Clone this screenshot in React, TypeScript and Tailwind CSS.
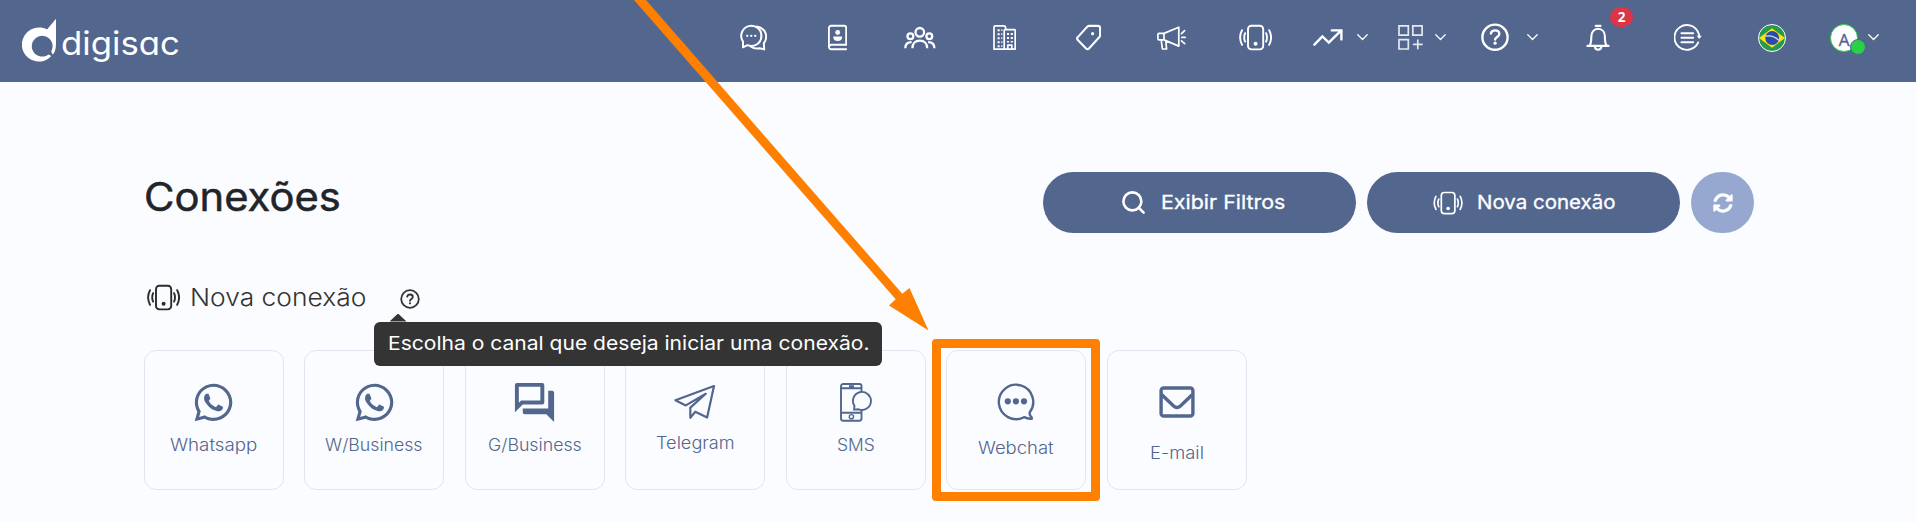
import { useLayoutEffect, useRef, useState } from "react";
import type { ReactNode } from "react";
import { Search } from "lucide-react";
import { FaSyncAlt, FaWhatsapp } from "react-icons/fa";
import { MdOutlineForum } from "react-icons/md";

/** One line of text whose glyphs are widened or narrowed to fill `width`. */
function FitText({ width, className = "", children }: { width: number; className?: string; children: string }) {
  const ref = useRef<HTMLSpanElement>(null);
  const [scale, setScale] = useState(1);
  useLayoutEffect(() => {
    if (ref.current && ref.current.offsetWidth) setScale(width / ref.current.offsetWidth);
  }, [width]);
  return (
    <span className="block shrink-0 text-left whitespace-nowrap" style={{ width }}>
      <span ref={ref} className={`inline-block origin-left ${className}`} style={{ transform: `scaleX(${scale})` }}>
        {children}
      </span>
    </span>
  );
}

function Glyph({ w, className = "", sw = 2, children }: { w: number; className?: string; sw?: number; children: ReactNode }) {
  return (
    <svg
      width={w}
      height={28}
      viewBox={`0 0 ${w} 28`}
      fill="none"
      stroke="currentColor"
      strokeWidth={sw}
      strokeLinecap="round"
      strokeLinejoin="round"
      className={`shrink-0 ${className}`}
    >
      {children}
    </svg>
  );
}

function Chevron({ className }: { className: string }) {
  return (
    <Glyph w={11} sw={1.3} className={className}>
      <path d="M.8 11.8 5.5 16.5l4.7-4.7" />
    </Glyph>
  );
}

function PhoneWaves({ className = "", sw = 1.9 }: { className?: string; sw?: number }) {
  return (
    <svg viewBox="0 0 33 28" fill="none" stroke="currentColor" strokeWidth={sw} strokeLinecap="round" className={`shrink-0 ${className}`}>
      <rect x="9" y="2.8" width="15.2" height="23.6" rx="3.4" />
      <circle cx="16.6" cy="20.8" r="2" fill="currentColor" stroke="none" />
      <path d="M6.1 10.2q-1.8 4.3 0 8.4M3 7.2q-3.8 7.2 0 14.6M27.1 10.2q1.8 4.3 0 8.4M30.2 7.2q3.8 7.2 0 14.6" />
    </svg>
  );
}

function Logo() {
  return (
    <div className="flex w-[718px] shrink-0 items-center pt-[5px]">
      <svg width="36" height="46" viewBox="0 0 36 46" fill="#fff" className="mt-[2px] mr-[3px]">
        <path
          fillRule="evenodd"
          d="M17 9.6c3.1 0 5.6.6 8 1.8L34 .8V26c0 5-1.3 8.5-3.2 10.8l-1.6-3.4A10.4 10.4 0 1 0 26.6 36.4l2.8 1.7A17 17 0 1 1 17 9.6Z"
        />
      </svg>
      <div className="pt-[6px]">
        <FitText width={119} className="text-[33px]/[36px] font-normal text-white [font-feature-settings:'cv11']">digisac</FitText>
      </div>
    </div>
  );
}

function Header() {
  return (
    <header className="flex h-[82px] items-center bg-[#52668e] pb-[8px] pl-[22px] text-white">
      <Logo />
      <nav className="flex items-center">
        <Glyph w={27}>
          <path d="M3 24.3V18.6A10.1 10.1 0 1 1 7.4 22.2Z" />
          <path d="M16.8 3.4C25.4 5 28.8 13.6 23.8 20.4l.4 6-4.6-1.2c-3 .8-6 .4-8.6-1.4" />
          <path d="M19.8 6.6c3 5.4 1.6 13-5.2 16.2" strokeWidth="1" />
          <path d="M7.2 12.8h.1M11.2 12.8h.1M15.2 12.8h.1" strokeWidth="2.3" />
        </Glyph>
        <Glyph w={19} className="ml-[61px]" sw={1.9}>
          <path d="M18.2 26.2H3.4A2.5 2.5 0 0 1 .9 23.7V5.2a2.5 2.5 0 0 1 2.5-2.5h12.8a2 2 0 0 1 2 2v17.1H3.4a2.2 2.2 0 0 0-2.2 2.2" />
          <circle cx="9.7" cy="9.5" r="2.4" fill="currentColor" stroke="none" />
          <path d="M5.2 13.5h9c0 3-1.5 4.5-4.5 4.5s-4.5-1.5-4.5-4.5Z" fill="currentColor" stroke="none" />
        </Glyph>
        <Glyph w={32} className="ml-[57px]" sw={2.3}>
          <circle cx="15.8" cy="9.3" r="4.3" />
          <circle cx="6.4" cy="13.3" r="2.9" />
          <circle cx="25.3" cy="13.3" r="2.9" />
          <path strokeLinecap="butt" d="M8.4 25.2c0-4.6 2.8-7.6 7.4-7.6s7.4 3 7.4 7.6M1.3 25.2c0-3.8 2.2-6 6.3-6M30.4 25.2c0-3.8-2.2-6-6.3-6" />
        </Glyph>
        <Glyph w={23} className="ml-[57px]" sw={1.7}>
          <path d="M11.2 26.2H1V4a1.2 1.2 0 0 1 1.2-1.2h8.4a2 2 0 0 1 2 2v1.4M11.2 26.2V7.6a1 1 0 0 1 1-1h9a1 1 0 0 1 1 1v18.6Z" />
          <path d="M14.8 26v-3.8h4V26" />
          <path strokeWidth="2.1" strokeLinecap="butt" strokeDasharray="2.1 1.9" d="M5.6 6.2v18M15 10v9.6M18.8 10v9.6" />
          <path strokeWidth="1.1" strokeLinecap="butt" strokeDasharray="1.9 2.1" d="M8.8 6.2v18" />
        </Glyph>
        <Glyph w={25} className="ml-[60px]" sw={2.1}>
          <path d="M13.3 2.9h8.8a2 2 0 0 1 2 2v7.3a3 3 0 0 1-.9 2.1L13 25.5a2 2 0 0 1-2.9 0l-8.3-8.6a2 2 0 0 1 0-2.8l9.3-10.2a3 3 0 0 1 2.2-1Z" />
          <circle cx="16.6" cy="10.7" r="1.6" fill="currentColor" stroke="none" />
        </Glyph>
        <Glyph w={29} className="ml-[56px]" sw={1.7}>
          <path d="M7 10.4 21.8 4.2v18.9L7 16.9M2 10.4h5v6.5H2a1.1 1.1 0 0 1-1.1-1.1v-4.3A1.1 1.1 0 0 1 2 10.4ZM4.2 17l1.2 9h4.2L8.8 17.8M24.5 10.6l3.1-3M24.8 14.4h3.4M24.5 17.8l3.1 2.9" />
        </Glyph>
        <PhoneWaves className="ml-[53px] h-[28px] w-[33px]" />
        <Glyph w={30} className="ml-[41px]" sw={2.4}>
          <path strokeLinejoin="miter" d="m1.4 21.7 8-8.3 6.4 6.2L28 7.6M18.8 7.4h9.6v9" />
        </Glyph>
        <Chevron className="ml-[14px]" />
        <Glyph w={25} className="ml-[30px] text-white/85" sw={1.7}>
          <path strokeLinejoin="miter" d="M1 2.8h9.3v9.3H1ZM14.8 2.8h9.3v9.3h-9.3ZM1 16.7h9.3V26H1ZM19.8 17.2v8.4M15.6 21.4H24" />
        </Glyph>
        <Chevron className="ml-[12px]" />
        <Glyph w={28} className="ml-[35px]" sw={2.4}>
          <circle cx="14" cy="14.2" r="12.6" />
          <path d="M9.9 10.6c.4-2 2-3.2 4.2-3.2 2.4 0 4.2 1.4 4.2 3.6 0 2.9-4.2 2.9-4.2 5.6" />
          <circle cx="14.1" cy="20.2" r="1.6" fill="currentColor" stroke="none" />
        </Glyph>
        <Chevron className="ml-[18px]" />
        <div className="relative ml-[48px]">
          <Glyph w={24} sw={2.1}>
            <path d="M9.7 2.9h4.8M1.4 22.9h21.2M3.6 22.4c1.8-2.4 1.7-4.4 1.7-8.6 0-4.6 2.6-8 6.8-8s6.8 3.4 6.8 8c0 4.2-.1 6.2 1.7 8.6M8.8 23.4c.2 2.4 1.6 3.4 3.3 3.4s3.1-1 3.3-3.4" />
          </Glyph>
          <span className="absolute top-[-16px] left-[24px] flex h-[20px] w-[23px] items-center justify-center rounded-full bg-[#dc3545] font-['Open_Sans','Noto_Sans',sans-serif] text-[13.5px] font-bold">
            2
          </span>
        </div>
        <Glyph w={28} className="ml-[64px]" sw={1.9}>
          <path d="M24.6 10.4A12.4 12.4 0 1 0 24.2 19.4M24.6 10.4q.6 1.4.7 3M7.4 10.2h11.8M7.4 14.7h11.8M7.4 19.3h11.8" />
          <path d="M22.6 12.8h5.2l-2.6 3.2Z" fill="currentColor" stroke="none" />
        </Glyph>
        <svg width="28" height="28" viewBox="0 0 28 28" className="mt-px ml-[56px]">
          <circle cx="14" cy="14" r="13.5" fill="#27994a" stroke="#fff" strokeWidth="1" />
          <path d="M14 4.2 27 14 14 23.8 1 14Z" fill="#ffe10f" />
          <circle cx="14.2" cy="14" r="6.9" fill="#2a4ba8" />
          <path d="M7.6 12.2c4.8-.8 9.6.6 13.2 4.2" stroke="#cfe0f5" strokeWidth="1.3" fill="none" />
        </svg>
        <div className="relative mt-px ml-[44px] flex h-[28px] w-[28px] items-center justify-center rounded-full border border-[#28d146] bg-white">
          <span className="pt-[3px] font-['Open_Sans','Noto_Sans',sans-serif] text-[17px] leading-none text-[#52668e] [-webkit-text-stroke:0.4px_#52668e]">A</span>
          <span className="absolute top-[14px] left-[19px] h-[16px] w-[16px] rounded-full border-[1.5px] border-[#52668e] bg-[#28d146]" />
        </div>
        <Chevron className="ml-[10px]" />
      </nav>
    </header>
  );
}

function TelegramIcon() {
  return (
    <svg width="42" height="36" viewBox="0 0 42 36" fill="none" stroke="currentColor" strokeWidth="2.2" strokeLinejoin="round" strokeLinecap="round">
      <path d="M40 2 1.4 16.2l10.4 5.2 20-11.6L16.3 23.6v10.2l5-6 11.8 5.8Z" />
    </svg>
  );
}

function SmsIcon() {
  return (
    <svg width="32" height="39" viewBox="0 0 32 39" fill="none" stroke="currentColor" strokeWidth="1.9" strokeLinejoin="round">
      <path d="M21.5 9V3.2A2.2 2.2 0 0 0 19.3 1H3.2A2.2 2.2 0 0 0 1 3.2v32.4a2.2 2.2 0 0 0 2.2 2.2h16.1a2.2 2.2 0 0 0 2.2-2.2V27M1 5.3h20.5M1 29.7h20.5M9 3.2h5" />
      <circle cx="11.4" cy="33.7" r="2.1" strokeWidth="1.4" />
      <path d="M14 26.6l.5-3.6A9 9 0 1 1 18.6 26.3Z" />
    </svg>
  );
}

function WebchatIcon() {
  return (
    <svg width="38" height="38" viewBox="0 0 38 38" fill="none" stroke="currentColor" strokeWidth="2.4" strokeLinejoin="round">
      <path d="M32.7 29.4A17.2 17.2 0 1 0 27 34.2Q30.8 36 34.8 35.7 35 34.4 33.6 33 32.4 31.6 32.7 29.4Z" />
      <g fill="currentColor" stroke="none">
        <circle cx="10.8" cy="18.3" r="3.1" />
        <circle cx="18.9" cy="18.3" r="3.1" />
        <circle cx="27" cy="18.3" r="3.1" />
      </g>
    </svg>
  );
}

function EmailIcon() {
  return (
    <svg width="36" height="32" viewBox="0 0 36 32" fill="none" stroke="currentColor" strokeWidth="3.4" strokeLinejoin="round">
      <rect x="2.1" y="2" width="31.8" height="28" rx="2.6" />
      <path d="M2.6 8.6 14.6 20q3.4 3 6.8 0L33.4 8.6" />
    </svg>
  );
}

const channels: { label: string; width: number; gap: string; icon: ReactNode }[] = [
  { label: "Whatsapp", width: 87, gap: "mt-[9px]", icon: <FaWhatsapp size={43} /> },
  { label: "W/Business", width: 98, gap: "mt-[9px]", icon: <FaWhatsapp size={43} /> },
  { label: "G/Business", width: 94, gap: "mt-[9px]", icon: <MdOutlineForum size={47} /> },
  { label: "Telegram", width: 79, gap: "mt-[7px]", icon: <TelegramIcon /> },
  { label: "SMS", width: 38, gap: "mt-[9px]", icon: <SmsIcon /> },
  { label: "Webchat", width: 76, gap: "mt-[12px]", icon: <WebchatIcon /> },
  { label: "E-mail", width: 54, gap: "mt-[17px]", icon: <EmailIcon /> },
];

export default function App() {
  return (
    <div className="relative h-[522px] w-[1916px] overflow-hidden bg-[#fbfcff] font-[Inter,sans-serif]">
      <Header />

      <main className="pt-[90px] pl-[144px]">
        <div className="flex h-[61px] items-center">
          <h1 className="w-[899px] pb-[11px] text-[39px]/[50px] font-normal text-[#212529] [-webkit-text-stroke:0.5px_#212529]">
            <FitText width={197}>Conexões</FitText>
          </h1>
          <div className="flex gap-[11px] text-[19px]/[24px] font-normal text-white [-webkit-text-stroke:0.3px_#fff]">
            <button className="flex h-[61px] w-[313px] items-center gap-[14px] rounded-full bg-[#52668e] pl-[77px]">
              <Search size={27} strokeWidth={2.3} className="shrink-0" />
              <FitText width={124}>Exibir Filtros</FitText>
            </button>
            <button className="flex h-[61px] w-[313px] items-center gap-[14px] rounded-full bg-[#52668e] pl-[66px]">
              <PhoneWaves className="h-[25px] w-[30px]" />
              <FitText width={139}>Nova conexão</FitText>
            </button>
            <button className="flex h-[61px] w-[63px] items-center justify-center rounded-full bg-[#96a8cf]">
              <FaSyncAlt size={20} />
            </button>
          </div>
        </div>

        <div className="mt-[50px] flex h-[28px] items-center">
          <PhoneWaves className="ml-[2.5px] h-[28px] w-[33px] text-[#2b2b2b]" />
          <h2 className="ml-[10.5px] pt-[2px] text-[24px]/[28px] font-light text-[#343434]">
            <FitText width={176}>Nova conexão</FitText>
          </h2>
          <div className="relative ml-[34px] text-[#343434]">
            <svg width="20" height="20" viewBox="0 0 20 20" fill="none" stroke="currentColor" strokeWidth="1.8" strokeLinecap="round" className="mt-[3px]">
              <circle cx="10" cy="10" r="8.8" />
              <path d="M7.2 7.7c.3-1.4 1.4-2.2 2.8-2.2 1.6 0 2.8 1 2.8 2.4 0 2-2.8 2-2.8 3.9" />
              <circle cx="10" cy="14.3" r="1.1" fill="currentColor" stroke="none" />
            </svg>
            <div className="absolute top-[36px] left-[-26.5px] flex h-[44px] w-[508px] items-center rounded-[6px] bg-[#343434] pt-px pl-[14px] text-[19px]/[24px] text-white">
              <span className="absolute top-[-8px] left-[16px] h-[8px] w-[17px] bg-[#343434] [clip-path:polygon(50%_0,100%_100%,0_100%)]" />
              <FitText width={482}>Escolha o canal que deseja iniciar uma conexão.</FitText>
            </div>
          </div>
        </div>

        <div className="mt-[39px] flex gap-[20.8px]">
          {channels.map((c) => (
            <div key={c.label} className="flex h-[140px] w-[139.7px] shrink-0 flex-col items-center rounded-[12px] border border-[#e2e5ef] pt-[30px] text-[#52668e]">
              <div className="flex h-[42px] items-center justify-center">{c.icon}</div>
              <div className={`${c.gap} pt-px text-[17px]/[24px] font-light`}>
                <FitText width={c.width}>{c.label}</FitText>
              </div>
            </div>
          ))}
        </div>
      </main>

      <div className="absolute top-[339px] left-[932px] h-[162px] w-[168px] rounded-[4px] border-[9px] border-[#ff8000]" />
      <svg width="300" height="332" viewBox="0 0 300 332" className="pointer-events-none absolute top-0 left-[632px]">
        <path d="M2 0H14L270.3 293.7 277.5 288 296.5 330.5 257 305.5 263.7 299.3Z" fill="#ff8000" />
      </svg>
    </div>
  );
}
